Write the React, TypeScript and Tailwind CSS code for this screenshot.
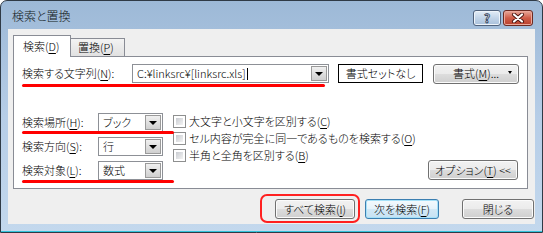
import { clsx } from "clsx";
import type { ReactNode } from "react";

// Win7 style push button
const Btn = ({
  children,
  className,
  focus = false,
}: {
  children: ReactNode;
  className?: string;
  focus?: boolean;
}) => (
  <div
    className={clsx(
      "flex h-[20px] items-center justify-center rounded-[3px] border text-[11px] leading-none",
      focus
        ? "border-[#3c7fb1] bg-[linear-gradient(#f4fafd_0%,#e6f3fb_50%,#d3e9f6_50%,#c6e2f3_100%)] shadow-[inset_0_0_0_1px_#a6e1f8]"
        : "border-[#707070] bg-[linear-gradient(#f2f2f2_0%,#ebebeb_50%,#dddddd_50%,#cfcfcf_100%)] shadow-[inset_0_0_0_1px_#fbfbfb]",
      className
    )}
  >
    {children}
  </div>
);

const Combo = ({ value, className }: { value: ReactNode; className?: string }) => (
  <div className={clsx("flex h-[19px] items-stretch border border-[#8d9096] bg-white", className)}>
    <div className="flex flex-1 items-center pl-[4px] text-[11px] leading-none">{value}</div>
    <div className="m-[1px] flex w-[16px] items-center justify-center border border-[#9a9a9a] bg-gradient-to-b from-[#f0f0f0] to-[#cfcfcf]">
      <div className="h-0 w-0 border-x-[4px] border-t-[4px] border-x-transparent border-t-black" />
    </div>
  </div>
);

const Check = ({ children }: { children: ReactNode }) => (
  <div className="flex h-[17px] items-center">
    <div className="h-[13px] w-[13px] border border-[#8e8f8f] bg-white p-[2px]">
      <div className="h-full w-full bg-gradient-to-br from-[#c9ccd1] to-[#f3f3f3]" />
    </div>
    <span className="ml-[3px] text-[11px] leading-none">{children}</span>
  </div>
);

const Mn = ({ c }: { c: string }) => <span className="underline underline-offset-[2px]">{c}</span>;

const RedLine = ({ className }: { className: string }) => (
  <div className={clsx("absolute h-[3px] rounded-full bg-[#ff0000]", className)} />
);

export default function App() {
  return (
    <div className="h-[233px] w-[543px] overflow-hidden bg-white">
      <div className="flex h-full w-full flex-col rounded-t-[7px] border border-[#2f3a46] bg-gradient-to-b from-[#9db9d7] via-[#b6cde7] to-[#c3d8ed] font-['Noto_Sans_CJK_JP',sans-serif] font-light text-black [font-feature-settings:'palt']">
        {/* title bar */}
        <div className="flex h-[28px] items-start pl-[11px] pr-[9px]">
          <span className="mt-[6px] text-[12px] leading-[18px] text-[#101820]">検索と置換</span>
          <div className="ml-auto mt-[9px] flex gap-[2px]">
            <div className="flex h-[16px] w-[28px] items-center justify-center rounded-[3px] border border-[#50627c] bg-gradient-to-b from-[#e3edf7] via-[#c2d4e8] to-[#a8c0db] shadow-[inset_0_0_0_1px_#eef4fa]">
              <span className="text-[12px] font-bold leading-none text-white [-webkit-text-stroke:0.8px_#1f3452]">?</span>
            </div>
            <div className="flex h-[16px] w-[30px] items-center justify-center rounded-[3px] border border-[#6b2a22] bg-gradient-to-b from-[#e7a89b] via-[#cf5c48] to-[#b8402d] shadow-[inset_0_0_0_1px_#eba99c]">
              <svg width="14" height="10" viewBox="0 0 14 10">
                <path d="M3 1.5 L11 8.5 M11 1.5 L3 8.5" stroke="#4a1410" strokeWidth="4" strokeLinecap="round" />
                <path d="M3 1.5 L11 8.5 M11 1.5 L3 8.5" stroke="#ffffff" strokeWidth="2.2" strokeLinecap="round" />
              </svg>
            </div>
          </div>
        </div>

        {/* client area */}
        <div className="mx-[7px] flex h-[195px] flex-col bg-[#efefef] pl-[5px] pr-[7px] pt-[6px]">
          {/* tabs */}
          <div className="flex h-[21px] items-end">
            <div className="relative z-10 -mb-px flex h-[22px] w-[58px] items-center border border-b-0 border-[#898c95] bg-white pl-[9px] text-[11px] leading-none">
              検索(<Mn c="D" />)
            </div>
            <div className="flex h-[18px] w-[54px] items-center border border-b-0 border-l-0 border-[#898c95] bg-gradient-to-b from-[#f3f3f3] to-[#e1e1e1] pl-[7px] text-[11px] leading-none">
              置換(<Mn c="P" />)
            </div>
          </div>

          {/* tab page */}
          <div className="relative h-[133px] border border-[#898c95] bg-white">
            <div className="ml-[8px] mt-[7px] flex h-[19px] items-center text-[11px] leading-none">
              <span className="w-[110px]">
                検索する文字列(<Mn c="N" />):
              </span>
              <Combo
                className="w-[197px]"
                value={
                  <span className="flex items-center">
                    C:¥linksrc¥[linksrc.xls]
                    <span className="ml-px inline-block h-[12px] w-px bg-black" />
                  </span>
                }
              />
              <div className="ml-[9px] flex h-[19px] w-[85px] items-center justify-center border border-black bg-white">
                書式セットなし
              </div>
              <Btn className="relative ml-[10px] h-[19px] w-[86px]">
                書式(<Mn c="M" />)...
                <span className="absolute right-[6px] top-[6px] h-0 w-0 border-x-[2.5px] border-t-[3px] border-x-transparent border-t-black" />
              </Btn>
            </div>

            <div className="mt-[30px] flex pr-[9px]">
              <div className="ml-[8px] flex flex-col gap-[5px] text-[11px] leading-none">
                <div className="flex h-[19px] items-center">
                  <span className="w-[76px]">
                    検索場所(<Mn c="H" />):
                  </span>
                  <Combo className="w-[65px]" value="ブック" />
                </div>
                <div className="flex h-[19px] items-center">
                  <span className="w-[76px]">
                    検索方向(<Mn c="S" />):
                  </span>
                  <Combo className="w-[65px]" value="行" />
                </div>
                <div className="flex h-[19px] items-center">
                  <span className="w-[76px]">
                    検索対象(<Mn c="L" />):
                  </span>
                  <Combo className="w-[65px]" value="数式" />
                </div>
              </div>
              <div className="ml-[10px] flex flex-1 items-end justify-between">
                <div className="flex flex-col self-start">
                  <Check>
                    大文字と小文字を区別する(<Mn c="C" />)
                  </Check>
                  <Check>
                    セル内容が完全に同一であるものを検索する(<Mn c="O" />)
                  </Check>
                  <Check>
                    半角と全角を区別する(<Mn c="B" />)
                  </Check>
                </div>
                <Btn className="h-[19px] w-[90px]">
                  オプション(<Mn c="T" />) &lt;&lt;
                </Btn>
              </div>
            </div>

            <RedLine className="left-[8px] top-[27px] w-[303px]" />
            <RedLine className="left-[8px] top-[74px] w-[152px]" />
            <RedLine className="left-[8px] top-[123px] w-[152px]" />
          </div>

          {/* bottom buttons */}
          <div className="mr-[-6px] mt-[10px] flex justify-end">
            <div className="relative">
              <Btn className="w-[80px]">
                すべて検索(<Mn c="I" />)
              </Btn>
              <div className="absolute -bottom-[4px] -left-[15px] -right-[5px] -top-[5px] rounded-[7px] border-2 border-[#ff2020]" />
            </div>
            <Btn focus className="ml-[10px] w-[74px]">
              次を検索(<Mn c="F" />)
            </Btn>
            <Btn className="ml-[23px] w-[72px]">閉じる</Btn>
          </div>
        </div>

        <div className="flex-1" />
        <div className="h-px bg-[#34c3da]" />
      </div>
    </div>
  );
}
